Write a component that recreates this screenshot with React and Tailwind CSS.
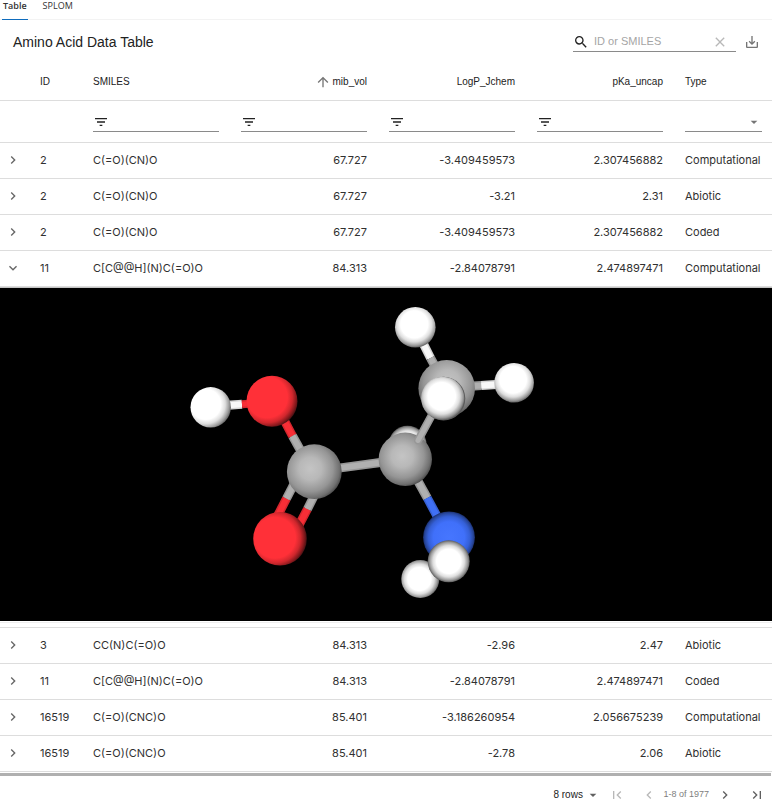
import React from "react";
import {
  MdArrowDropDown,
  MdArrowUpward,
  MdChevronLeft,
  MdChevronRight,
  MdClear,
  MdExpandMore,
  MdFilterList,
  MdFirstPage,
  MdLastPage,
  MdSaveAlt,
  MdSearch,
} from "react-icons/md";

const rows = [
  ["2", "C(=O)(CN)O", "67.727", "-3.409459573", "2.307456882", "Computational"],
  ["2", "C(=O)(CN)O", "67.727", "-3.21", "2.31", "Abiotic"],
  ["2", "C(=O)(CN)O", "67.727", "-3.409459573", "2.307456882", "Coded"],
  ["11", "C[C@@H](N)C(=O)O", "84.313", "-2.84078791", "2.474897471", "Computational", true],
  ["3", "CC(N)C(=O)O", "84.313", "-2.96", "2.47", "Abiotic"],
  ["11", "C[C@@H](N)C(=O)O", "84.313", "-2.84078791", "2.474897471", "Coded"],
  ["16519", "C(=O)(CNC)O", "85.401", "-3.186260954", "2.056675239", "Computational"],
  ["16519", "C(=O)(CNC)O", "85.401", "-2.78", "2.06", "Abiotic"],
];

const shades = {
  H: [["0", "#ffffff"], ["0.58", "#ffffff"], ["0.75", "#dedede"], ["0.9", "#9c9c9c"], ["1", "#5c5c5c"]],
  C: [["0", "#c4c4c4"], ["0.35", "#b8b8b8"], ["0.7", "#959595"], ["0.9", "#707070"], ["1", "#4c4c4c"]],
  O: [["0", "#ff3038"], ["0.64", "#ff3038"], ["0.8", "#cf272d"], ["0.92", "#84181c"], ["1", "#401012"]],
  N: [["0", "#4676ff"], ["0.6", "#4070fa"], ["0.8", "#3560d8"], ["0.93", "#28489f"], ["1", "#1b3070"]],
};

/* dx and dy move the lit spot away from the middle of the atom */
function Atom({ id, kind, x, y, r, dx = 0, dy = 0 }) {
  return (
    <g>
      <radialGradient
        id={id}
        gradientUnits="userSpaceOnUse"
        cx={x + dx}
        cy={y + dy}
        r={r + Math.hypot(dx, dy)}
      >
        {shades[kind].map(([offset, color]) => (
          <stop key={offset} offset={offset} stopColor={color} />
        ))}
      </radialGradient>
      <circle cx={x} cy={y} r={r} fill={`url(#${id})`} />
    </g>
  );
}

const bondColors = { H: "#f8f8f8", C: "#b0b0b0", O: "#f82e36", N: "#4070f5" };

function Bond({ from, to, kind, w = 9, cap = "butt" }) {
  const line = { x1: from[0], y1: from[1], x2: to[0], y2: to[1], strokeLinecap: cap };
  return (
    <g>
      <line {...line} stroke={bondColors[kind]} strokeWidth={w} />
      <line {...line} stroke="#000000" strokeOpacity="0.14" strokeWidth={w} />
      <line {...line} stroke={bondColors[kind]} strokeWidth={w - 3} />
    </g>
  );
}

function Molecule() {
  return (
    <svg
      viewBox="0 288 772 333"
      className="block h-full w-full"
      role="img"
      aria-label="Ball and stick model of alanine"
    >
      <Bond kind="H" from={[228, 405.2]} to={[242, 404.2]} />
      <Bond kind="O" from={[242, 404.2]} to={[252, 403.4]} w={8} />
      <Atom id="h1" kind="H" x={210.7} y={407.3} r={20.2} dx={-5} dy={-3} />
      <Bond kind="O" from={[282, 416]} to={[292.5, 436]} />
      <Bond kind="C" from={[292.5, 436]} to={[302, 453]} />
      <Atom id="o1" kind="O" x={272} y={401.3} r={25.5} dx={-5} dy={-4} />

      <Bond kind="O" from={[277, 517]} to={[286.5, 498.5]} />
      <Bond kind="C" from={[286.5, 498.5]} to={[294, 484]} />
      <Bond kind="O" from={[297, 529]} to={[307.5, 509]} />
      <Bond kind="C" from={[307.5, 509]} to={[315, 494]} />
      <Atom id="o2" kind="O" x={280} y={538.7} r={26.8} dx={-5} dy={-1} />

      <Atom id="h2" kind="H" x={407.5} y={445} r={19.2} />
      <Bond kind="C" from={[335, 468.6]} to={[386, 461.8]} />
      <Atom id="c1" kind="C" x={314.3} y={471.7} r={27.4} dx={-4} dy={-3} />

      <Bond kind="C" from={[414, 474]} to={[427.3, 498]} />
      <Bond kind="N" from={[427.3, 498]} to={[438, 518]} />
      <Atom id="c2" kind="C" x={405.3} y={459.3} r={26.7} dx={-3} dy={-3} />
      <Bond kind="C" from={[418, 440.5]} to={[433, 413]} w={8} cap="round" />

      <Bond kind="H" from={[422, 341]} to={[430.5, 358]} />
      <Bond kind="C" from={[430.5, 358]} to={[436, 368]} />
      <Atom id="h3" kind="H" x={415.3} y={327.3} r={20.3} dx={-1} dy={-3} />
      <Bond kind="C" from={[470, 386.2]} to={[481.3, 385.6]} />
      <Bond kind="H" from={[481.3, 385.6]} to={[500, 384.3]} />
      <Atom id="c3" kind="C" x={446.7} y={388.3} r={28.3} dx={1} dy={-6} />
      <Atom id="h4" kind="H" x={514.1} y={382.8} r={19.8} dx={-1} dy={-3} />
      <circle cx="443.5" cy="398.6" r="21.8" fill="#5c5c5c" />
      <Atom id="h5" kind="H" x={442.7} y={398.3} r={21.6} dx={-1} dy={-2} />

      <Atom id="n1" kind="N" x={449} y={537.3} r={25.9} />
      <Atom id="h6" kind="H" x={420.3} y={579} r={19} dx={-1} />
      <Atom id="h7" kind="H" x={448.7} y={561.3} r={21} />
    </svg>
  );
}

function TextFilter({ label }) {
  return (
    <label className="flex h-5 items-center border-b border-[#8a8a8a] text-[#222222]">
      <MdFilterList className="size-4 shrink-0" />
      <input
        type="text"
        aria-label={`Filter ${label}`}
        className="ml-2 w-full min-w-0 bg-transparent text-[11px] outline-none"
      />
    </label>
  );
}

function DataRow({ row }) {
  const [id, smiles, volume, logP, pKa, type, open] = row;
  return (
    <tr className="h-9 border-b border-[#dddddd]">
      <td className="pl-[5px]">
        <button
          type="button"
          aria-expanded={!!open}
          aria-label={`Structure of ${smiles}`}
          className="block text-[#666666]"
        >
          {open ? <MdExpandMore className="size-4" /> : <MdChevronRight className="size-4" />}
        </button>
      </td>
      <td className="pl-[11px]">{id}</td>
      <td className="px-[11px]">{smiles}</td>
      <td className="px-[11px] text-right">{volume}</td>
      <td className="px-[11px] text-right">{logP}</td>
      <td className="px-[11px] text-right">{pKa}</td>
      <td className="pl-[11px]">{type}</td>
    </tr>
  );
}

export default function App() {
  return (
    <main className="min-h-screen bg-white font-['Liberation_Sans',Arial,sans-serif] text-[#222222]">
      <div
        role="tablist"
        className="flex h-5 gap-3.5 border-b border-[#f3f3f3] pl-0.5 font-['Open_Sans',sans-serif] text-[9px] leading-3 text-[#333333]"
      >
        <button
          type="button"
          role="tab"
          aria-selected="true"
          className="-mb-px flex items-start border-b border-[#0f6cbd] px-px font-semibold"
        >
          Table
        </button>
        <button type="button" role="tab" aria-selected="false" className="flex items-start px-px">
          SPLOM
        </button>
      </div>

      <header className="flex h-11 items-center justify-between pl-[13px] pr-3">
        <h1 className="text-sm">Amino Acid Data Table</h1>
        <div className="flex items-center gap-2">
          <label className="flex h-5 w-[163px] items-center border-b border-[#8a8a8a]">
            <MdSearch className="size-4 shrink-0" />
            <input
              type="text"
              aria-label="Search"
              placeholder="ID or SMILES"
              className="ml-[5px] w-full min-w-0 bg-transparent text-[11px] outline-none placeholder:text-[#a5a5a5]"
            />
            <button type="button" aria-label="Clear search" className="mr-2 text-[#b8b8b8]">
              <MdClear className="size-4" />
            </button>
          </label>
          <button type="button" aria-label="Export" className="text-[#757575]">
            <MdSaveAlt className="size-4" />
          </button>
        </div>
      </header>

      <table className="w-full table-fixed border-collapse font-[Inter,sans-serif] text-[11px] text-[#303030]">
        <colgroup>
          <col className="w-[29px]" />
          <col className="w-[53px]" />
          <col />
          <col />
          <col />
          <col />
          <col className="w-[98px]" />
        </colgroup>
        <thead className="font-['Liberation_Sans',Arial,sans-serif] text-[10px] text-[#222222]">
          <tr className="h-9 border-b border-[#dddddd] text-left">
            <td />
            <th className="pl-[11px] font-normal">ID</th>
            <th className="px-[11px] font-normal">SMILES</th>
            <th className="px-[11px] font-normal" aria-sort="ascending">
              <button type="button" className="flex w-full items-center justify-end gap-0.5">
                <MdArrowUpward className="size-4 text-[#757575]" />
                mib_vol
              </button>
            </th>
            <th className="px-[11px] text-right font-normal">LogP_Jchem</th>
            <th className="px-[11px] text-right font-normal">pKa_uncap</th>
            <th className="pl-[11px] font-normal">Type</th>
          </tr>
          <tr className="h-[42px] border-b border-[#dddddd]">
            <td />
            <td />
            <td className="px-[11px] pt-0.5"><TextFilter label="SMILES" /></td>
            <td className="px-[11px] pt-0.5"><TextFilter label="mib_vol" /></td>
            <td className="px-[11px] pt-0.5"><TextFilter label="LogP_Jchem" /></td>
            <td className="px-[11px] pt-0.5"><TextFilter label="pKa_uncap" /></td>
            <td className="pl-[11px] pr-2.5 pt-0.5">
              <div className="relative h-5 border-b border-[#8a8a8a]">
                <select aria-label="Filter Type" className="h-full w-full appearance-none bg-transparent outline-none">
                  <option value="" />
                </select>
                <MdArrowDropDown className="pointer-events-none absolute right-0 top-0.5 size-4 text-[#757575]" />
              </div>
            </td>
          </tr>
        </thead>
        <tbody>
          {rows.map((row, i) => (
            <React.Fragment key={i}>
              <DataRow row={row} />
              {row[6] && (
                <tr className="border-b border-[#dddddd]">
                  <td colSpan={7} className="p-0">
                    <div className="border-t border-[#c4c4c4] pb-1">
                      <div className="h-[333px] bg-black">
                        <Molecule />
                      </div>
                      <div className="mt-px border-b border-[#eeeeee]" />
                    </div>
                  </td>
                </tr>
              )}
            </React.Fragment>
          ))}
        </tbody>
      </table>
      <div className="mr-px mt-px h-[3px] bg-[#b0b0b0]" />

      <footer className="flex h-[34px] items-center justify-end pr-[7px] pt-1 text-[#606060]">
        <div className="relative mr-2">
          <select
            aria-label="Rows per page"
            className="block h-4 w-12 appearance-none bg-transparent text-[10px] text-[#222222] outline-none"
          >
            <option>8 rows</option>
          </select>
          <MdArrowDropDown className="pointer-events-none absolute right-0 top-0 size-4" />
        </div>
        <button type="button" aria-label="First page" disabled className="mr-4 text-[#b8b8b8]">
          <MdFirstPage className="size-4" />
        </button>
        <button type="button" aria-label="Previous page" disabled className="mr-1.5 text-[#b8b8b8]">
          <MdChevronLeft className="size-4" />
        </button>
        <span className="mr-2 text-[9px] text-[#808080]">1-8 of 1977</span>
        <button type="button" aria-label="Next page" className="mr-4">
          <MdChevronRight className="size-4" />
        </button>
        <button type="button" aria-label="Last page">
          <MdLastPage className="size-4" />
        </button>
      </footer>
    </main>
  );
}
